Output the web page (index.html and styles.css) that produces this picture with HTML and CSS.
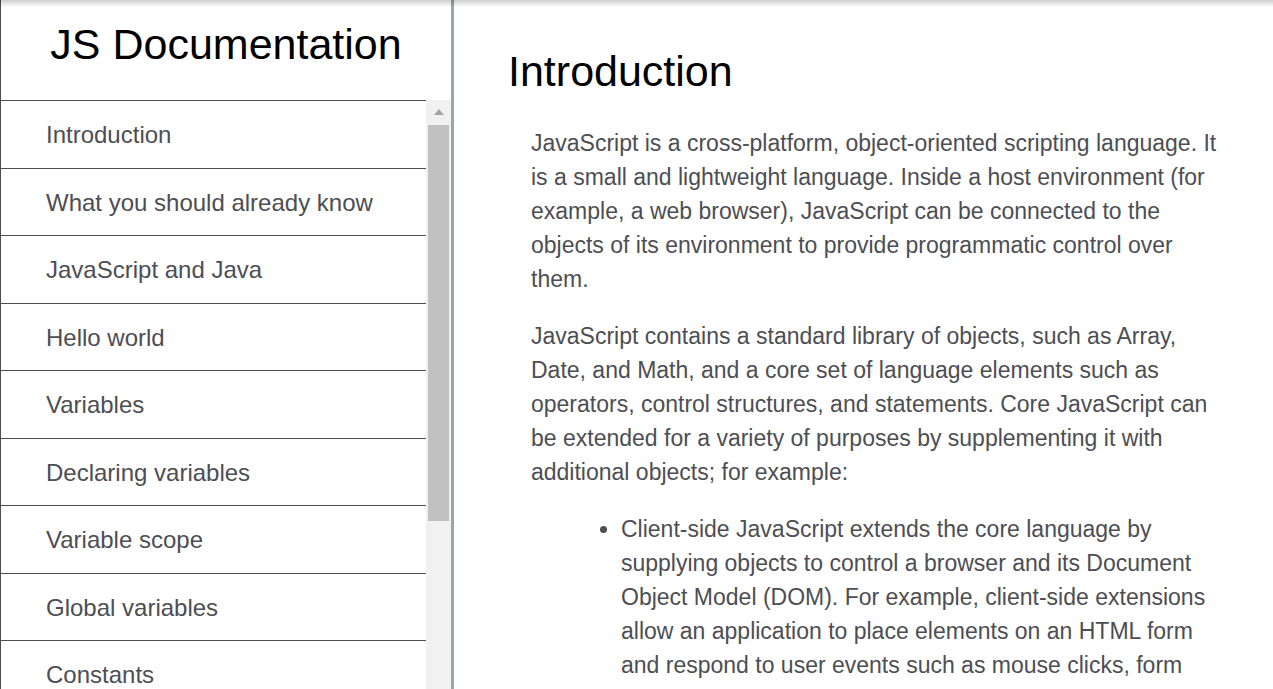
FILE: index.html
```html
<!DOCTYPE html>
<html>
    <head>
        <meta charset="utf-8">
        <title>JS Documentation</title>
        <link rel="stylesheet" href="styles.css">
    </head>
    <body>
        <nav id="navbar">
            <header class="nav_title">JS Documentation</header>
            <div class="nav_body">
                <ul class="nav_list">
                    <li><a class="nav-link" href="#Introduction">Introduction</a></li>
                    <li><a class="nav-link" href="#What_you_should_already_know">What you should already know</a></li>
                    <li><a class="nav-link" href="#JavaScript_and_Java">JavaScript and Java</a></li>
                    <li><a class="nav-link" href="#Hello_world">Hello world</a></li>
                    <li><a class="nav-link" href="#Variables">Variables</a></li>
                    <li><a class="nav-link" href="#Declaring_variables">Declaring variables</a></li>
                    <li><a class="nav-link" href="#Variable_scope">Variable scope</a></li>
                    <li><a class="nav-link" href="#Global_variables">Global variables</a></li>
                    <li><a class="nav-link" href="#Constants">Constants</a></li>
                    <li><a class="nav-link" href="#Data_types">Data types</a></li>
                    <li><a class="nav-link" href="#if...else_statement">if...else statement</a></li>
                    <li><a class="nav-link" href="#while_statement">while statement</a></li>
                    <li><a class="nav-link" href="#Function_declarations">Function declarations</a></li>
                    <li><a class="nav-link" href="#Reference">Reference</a></li>
                </ul>
                <!-- drawn scrollbar for the list -->
                <div class="nav_scroll">
                    <div class="scroll_button"><span class="scroll_arrow"></span></div>
                    <div class="scroll_thumb"></div>
                </div>
            </div>
        </nav>
        <main id="main-doc">
            <section class="main-section" id="Introduction">
                <header class="section_title">Introduction</header>
                <article>
                    <p>JavaScript is a cross-platform, object-oriented scripting language. It is a small and lightweight language. Inside a host environment (for example, a web browser), JavaScript can be connected to the objects of its environment to provide programmatic control over them.</p>
                    <p>JavaScript contains a standard library of objects, such as Array, Date, and Math, and a core set of language elements such as operators, control structures, and statements. Core JavaScript can be extended for a variety of purposes by supplementing it with additional objects; for example:</p>
                    <ul>
                        <li>Client-side JavaScript extends the core language by supplying objects to control a browser and its Document Object Model (DOM). For example, client-side extensions allow an application to place elements on an HTML form and respond to user events such as mouse clicks, form input, and page navigation.</li>
                        <li>Server-side JavaScript extends the core language by supplying objects relevant to running JavaScript on a server. For example, server-side extensions allow an application to communicate with a database, provide continuity of information from one invocation to another of the application, or perform file manipulations on a server.</li>
                    </ul>
                </article>
            </section>
            <section class="main-section" id="What_you_should_already_know">
                <header class="section_title">What you should already know</header>
                <article>
                    <p>This guide assumes you have the following basic background:</p>
                    <ul>
                        <li>A general understanding of the Internet and the World Wide Web (WWW).</li>
                        <li>Good working knowledge of HyperText Markup Language (HTML).</li>
                        <li>Some programming experience. If you are new to programming, try one of the tutorials linked on the main page about JavaScript.</li>
                    </ul>
                </article>
            </section>
        </main>
    </body>
</html>
```

FILE: styles.css
```css
body
{
    margin: 0;
    display: flex;
    height: 100vh;
    overflow: hidden;
    font-family: "Liberation Sans", Arial, sans-serif;
    color: #4d4e53;
}
body::before/*light shade along the top of the window*/
{
    content: '';
    position: fixed;
    top: 0;
    left: 0;
    right: 0;
    height: 7px;
    background: linear-gradient(rgba(0, 0, 0, 0.2), rgba(0, 0, 0, 0));
    pointer-events: none;
}
#navbar
{
    flex: none;
    width: 450px;
    height: 100vh;
    display: flex;
    flex-direction: column;
    overflow: hidden;
    border-left: 1px solid #4d4e53;
    border-right: 3px solid #9da5a5;
}
.nav_title
{
    flex: none;
    height: 100px;
    box-sizing: border-box;
    padding-top: 20px;
    text-align: center;
    font-size: 43px;
    color: #000;
}
.nav_body
{
    flex: 1;
    min-height: 0;
    display: flex;
}
.nav_list
{
    flex: 1;
    list-style: none;
    margin: 0;
    padding: 0;
    overflow: hidden;
}
.nav_list li
{
    border-top: 1px solid #4d4e53;
}
.nav-link
{
    display: block;
    padding: 20px 10px 19.5px 45px;
    font-size: 24px;
    line-height: 27px;
    color: #4d4e53;
    text-decoration: none;
    white-space: nowrap;
}
.nav_scroll
{
    flex: none;
    width: 25px;
    background-color: #f1f1f1;
}
.scroll_button
{
    height: 25px;
    display: flex;
    justify-content: center;
    padding-top: 9px;
    box-sizing: border-box;
}
.scroll_arrow/*css triangle*/
{
    width: 0;
    height: 0;
    border-left: 5.5px solid transparent;
    border-right: 5.5px solid transparent;
    border-bottom: 6px solid #a3a3a3;
}
.scroll_thumb
{
    height: 396px;
    margin: 0 2px;
    background-color: #c1c1c1;
}
#main-doc
{
    flex: 1;
    height: 100vh;
    box-sizing: border-box;
    overflow: hidden;
    padding: 46.5px 43px 0 53px;
}
.section_title
{
    font-size: 43px;
    color: #000;
    margin: 0 0 30px 1px;
}
.main-section article
{
    margin-left: 24px;
}
.main-section p
{
    margin: 0 0 23px 0;
    font-size: 23px;
    line-height: 34px;
}
.main-section ul
{
    margin: 0 0 23px 0;
    padding-left: 90px;
    font-size: 23px;
    line-height: 34px;
}
```
